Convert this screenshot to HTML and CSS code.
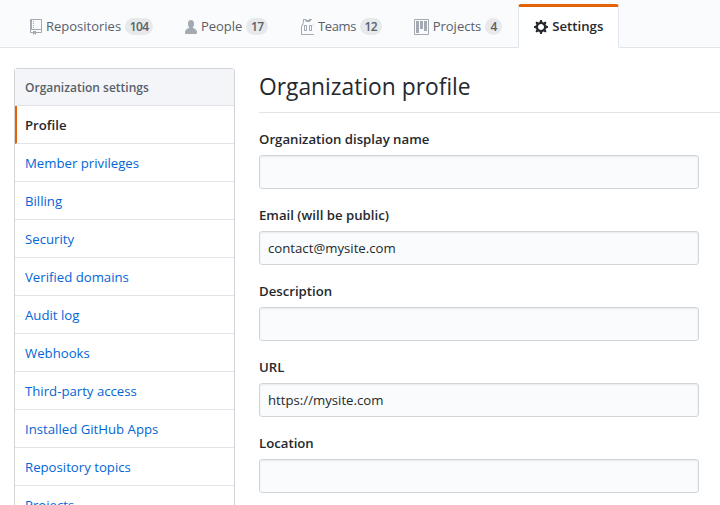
FILE: index.html
```html
<!DOCTYPE html>
<html lang="en">
<head>
<meta charset="utf-8">
<title>Organization profile</title>
<link rel="stylesheet" href="styles.css">
</head>
<body>
<nav class="tabnav">
  <a class="tab"><svg class="icon" width="12" height="16" viewBox="0 0 12 16"><path d="M4 9H3V8h1v1zm0-3H3v1h1V6zm0-2H3v1h1V4zm0-2H3v1h1V2zm8-1v12c0 .55-.45 1-1 1H6v2l-1.5-1.5L3 16v-2H1c-.55 0-1-.45-1-1V1c0-.55.45-1 1-1h10c.55 0 1 .45 1 1zm-1 10H1v2h2v-1h3v1h5v-2zm0-10H2v9h9V1z"/></svg><span>Repositories</span><span class="counter">104</span></a>
  <a class="tab"><svg class="icon" width="12" height="16" viewBox="0 0 12 16"><path d="M12 14.002a.998.998 0 0 1-.998.998H1.001A1 1 0 0 1 0 13.999V13c0-2.633 4-4 4-4s.229-.41 0-1c-.841-.62-.944-1.59-1-4 .173-2.413 1.867-3 3-3s2.827.586 3 3c-.056 2.41-.159 3.38-1 4-.229.59 0 1 0 1s4 1.367 4 4v1.002z"/></svg><span>People</span><span class="counter">17</span></a>
  <a class="tab"><svg class="icon" width="14" height="16" viewBox="0 0 14 16"><path d="M4.5 6l-.5.5v5l.5.5h2l.5-.5v-5L6.5 6h-2zM6 11H5V7h1v4zm6.27-7.25C12.05 2.37 11.96 1.12 12 0H9.02c0 .27-.13.48-.39.69-.25.2-.63.3-1.13.3-.5 0-.88-.09-1.13-.3-.23-.2-.36-.42-.36-.69H3c.05 1.13-.03 2.38-.25 3.75C2.55 5.13 1.95 6.28 1 7v9h13V7c-.95-.72-1.55-1.87-1.73-3.25zM13 15H2V7.56c1.03-.86 1.61-2.11 1.75-3.75.09-.74.17-1.59.25-2.81h1c0 .72.48 1.28 1 1.63.5.37 1.16.37 2 .37s1.5 0 2-.37c.52-.35 1-.91 1-1.63h1c.08 1.22.16 2.07.25 2.81.14 1.64.72 2.89 1.75 3.75V15zm-3.5-9l-.5.5v5l.5.5h2l.5-.5v-5l-.5-.5h-2zM11 11h-1V7h1v4z"/></svg><span class="tab-narrow">Teams</span><span class="counter">12</span></a>
  <a class="tab"><svg class="icon" width="15" height="16" viewBox="0 0 15 16"><path d="M10 12h3V2h-3v10zm-4-2h3V2H6v8zm-4 4h3V2H2v12zm-1 1h13V1H1v14zM14 0H1a1 1 0 0 0-1 1v14a1 1 0 0 0 1 1h13a1 1 0 0 0 1-1V1a1 1 0 0 0-1-1z"/></svg><span>Projects</span><span class="counter">4</span></a>
  <a class="tab tab-selected"><svg class="icon" width="14" height="16" viewBox="0 0 14 16"><path d="M14 8.77v-1.6l-1.94-.64-.45-1.09.88-1.84-1.13-1.13-1.81.91-1.09-.45-.69-1.92h-1.6l-.63 1.94-1.11.45-1.84-.88-1.13 1.13.91 1.81-.45 1.09L0 7.23v1.59l1.94.64.45 1.09-.88 1.84 1.13 1.13 1.81-.91 1.09.45.69 1.92h1.59l.63-1.94 1.11-.45 1.84.88 1.13-1.13-.92-1.81.47-1.09L14 8.75v.02zM7 11c-1.66 0-3-1.34-3-3s1.34-3 3-3 3 1.34 3 3-1.34 3-3 3z"/></svg><span>Settings</span></a>
</nav>
<div class="layout">
  <aside class="menu">
    <h3 class="menu-heading">Organization settings</h3>
    <a class="menu-item menu-current">Profile</a>
    <a class="menu-item">Member privileges</a>
    <a class="menu-item">Billing</a>
    <a class="menu-item">Security</a>
    <a class="menu-item">Verified domains</a>
    <a class="menu-item">Audit log</a>
    <a class="menu-item">Webhooks</a>
    <a class="menu-item">Third-party access</a>
    <a class="menu-item">Installed GitHub Apps</a>
    <a class="menu-item">Repository topics</a>
    <a class="menu-item">Projects</a>
  </aside>
  <main class="content">
    <h2 class="title">Organization profile</h2>
    <div class="field"><label class="label">Organization display name</label><div class="input"></div></div>
    <div class="field"><label class="label">Email (will be public)</label><div class="input">contact@mysite.com</div></div>
    <div class="field"><label class="label">Description</label><div class="input"></div></div>
    <div class="field"><label class="label">URL</label><div class="input">https://mysite.com</div></div>
    <div class="field"><label class="label">Location</label><div class="input"></div></div>
  </main>
</div>
</body>
</html>
```

FILE: styles.css
```css
* { box-sizing: border-box; }
html, body { margin: 0; height: 505px; overflow: hidden; background: #fff; }
body { font-family: "Open Sans", "Liberation Sans", sans-serif; font-size: 13.2px; color: #24292e; }
.tabnav { display: flex; height: 48px; padding: 4px 0 0 14px; background: #fafbfc; border-bottom: 1px solid #e1e4e8; }
.tab { display: flex; align-items: center; height: 44px; padding: 0 15px 2px; border: 1px solid transparent; border-top-width: 3px; color: #586069; font-size: 13px; }
.tab-narrow { letter-spacing: -.35px; }
.icon { fill: #a3aab1; fill-rule: evenodd; margin: 2px 4px 0 0; flex: none; }
.counter { min-width: 17px; margin-left: 4px; padding: 0 4.5px; border-radius: 20px; background: rgba(27,31,35,.08); color: #586069; font-size: 12px; font-weight: 600; letter-spacing: -.6px; line-height: 17px; text-align: center; }
.tab-selected { background: #fff; color: #24292e; font-size: 13.2px; font-weight: 600; border-color: #e1e4e8; border-top-color: #e36209; border-bottom-color: #fff; border-radius: 3px 3px 0 0; }
.tab-selected .icon { fill: #24292e; }
.layout { display: flex; padding: 20px 21px 0 14px; }
.menu { width: 221px; flex: none; margin-right: 24px; border: 1px solid #d1d5da; border-radius: 3px 3px 0 0; }
.menu-heading { margin: 0; height: 37px; padding: 0 10px; background: #f3f5f8; border-bottom: 1px solid #e1e4e8; color: #586069; font-size: 12px; font-weight: 600; line-height: 38px; }
.menu-item { display: block; height: 38px; padding: 0 10px; border-bottom: 1px solid #e1e4e8; color: #0366d6; line-height: 39px; }
.menu-current { color: #24292e; font-weight: 600; border-left: 2px solid #e36209; padding-left: 8px; }
.content { flex: 1; min-width: 0; margin-right: -21px; }
.title { margin: 0; height: 45px; font-size: 22.8px; font-weight: 400; line-height: 38px; border-bottom: 1px solid #e1e4e8; }
.field { width: 440px; height: 76px; padding-top: 16px; }
.label { display: block; height: 26px; font-weight: 600; line-height: 20px; }
.input { height: 34px; padding: 0 8px; background: #fafbfc; border: 1px solid #d1d5da; border-radius: 3px; line-height: 32px; box-shadow: inset 0 1px 2px rgba(27,31,35,.075); }
```
